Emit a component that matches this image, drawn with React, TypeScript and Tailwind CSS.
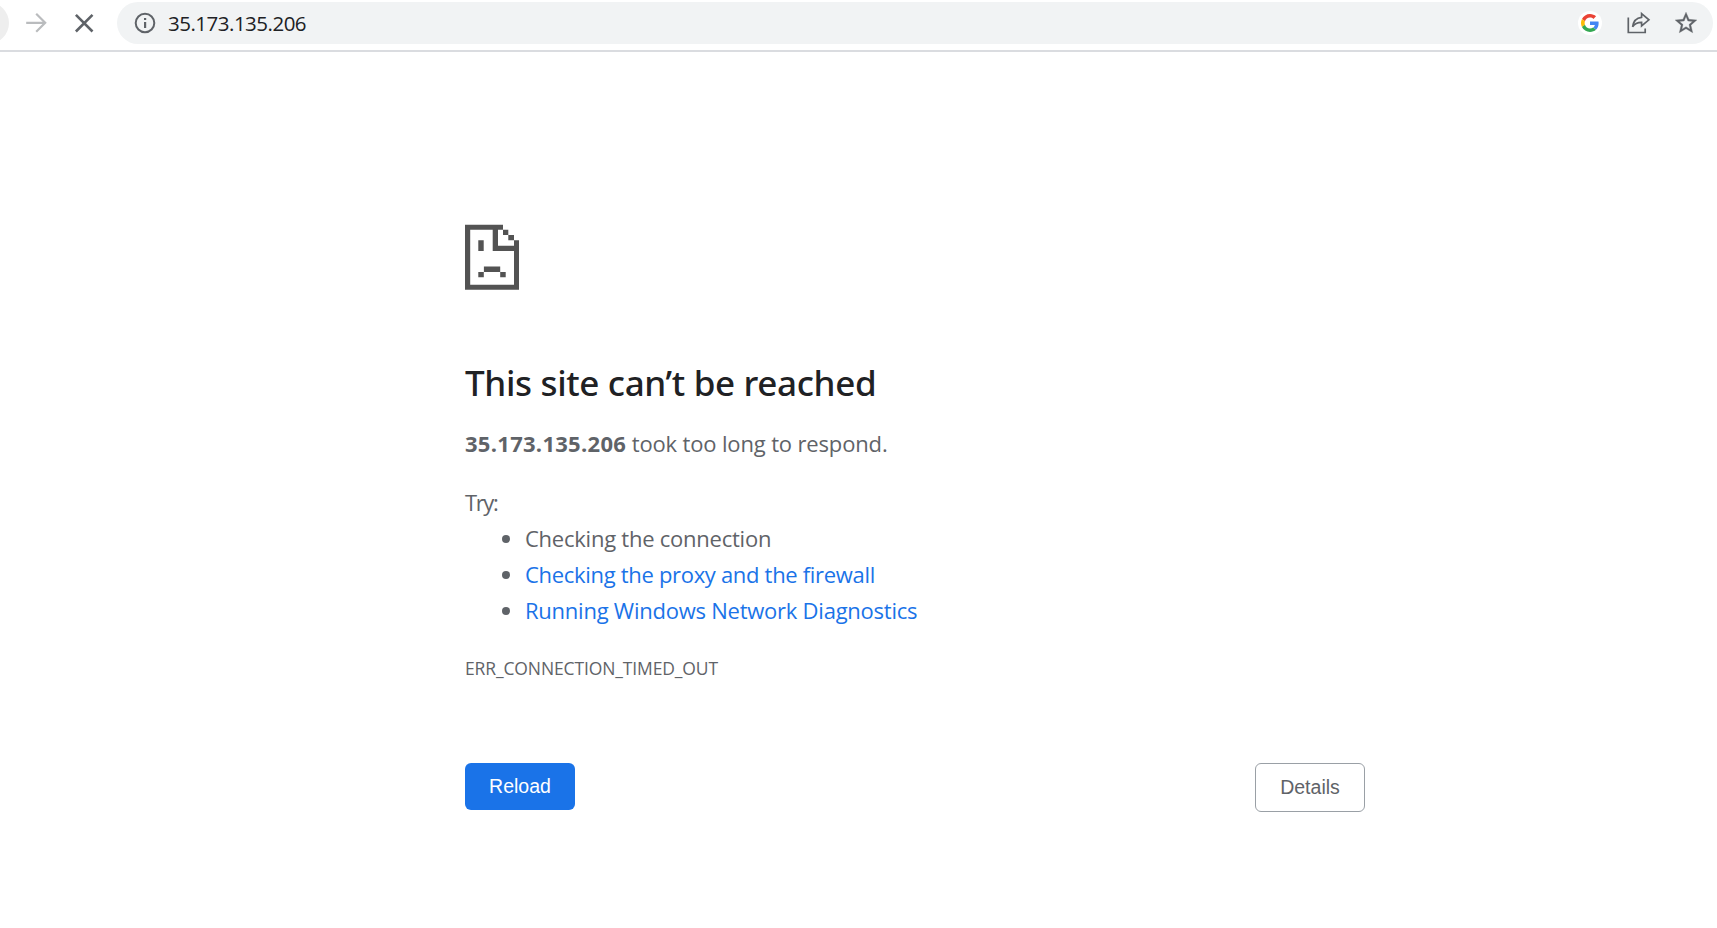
function ForwardIcon() {
  return (
    <svg width="24" height="24" viewBox="0 0 24 24" fill="none" stroke="#babcbe" strokeWidth="2.2">
      <path d="M2.2 11.8H21M12.2 2.8l9 9-9 9" />
    </svg>
  );
}

function StopIcon() {
  return (
    <svg width="24" height="24" viewBox="0 0 24 24" fill="none" stroke="#5f6368" strokeWidth="2.6">
      <path d="M3.9 3.9l16.6 16.6M20.5 3.9L3.9 20.5" />
    </svg>
  );
}

function InfoIcon() {
  return (
    <svg width="22" height="22" viewBox="0 0 22 22" fill="none">
      <circle cx="11" cy="11" r="9.3" stroke="#5f6368" strokeWidth="2" />
      <path d="M10 6h2.2v2.1H10zM10 10h2.2v6H10z" fill="#5f6368" />
    </svg>
  );
}

function GoogleIcon() {
  return (
    <svg width="18" height="18" viewBox="0 0 48 48">
      <path fill="#EA4335" d="M24 9.5c3.54 0 6.71 1.22 9.21 3.6l6.85-6.85C35.9 2.38 30.47 0 24 0 14.62 0 6.51 5.38 2.56 13.22l7.98 6.19C12.43 13.72 17.74 9.5 24 9.5z" />
      <path fill="#4285F4" d="M46.98 24.55c0-1.57-.15-3.09-.38-4.55H24v9.02h12.94c-.58 2.96-2.26 5.48-4.78 7.18l7.73 6c4.51-4.18 7.09-10.36 7.09-17.65z" />
      <path fill="#FBBC05" d="M10.53 28.59c-.48-1.45-.76-2.99-.76-4.59s.27-3.14.76-4.59l-7.98-6.19C.92 16.46 0 20.12 0 24c0 3.88.92 7.54 2.56 10.78l7.97-6.19z" />
      <path fill="#34A853" d="M24 48c6.48 0 11.93-2.13 15.89-5.81l-7.73-6c-2.15 1.45-4.92 2.3-8.16 2.3-6.26 0-11.57-4.22-13.47-9.91l-7.98 6.19C6.51 42.62 14.62 48 24 48z" />
    </svg>
  );
}

function ShareIcon() {
  return (
    <svg width="24" height="24" viewBox="0 0 24 24" fill="none" stroke="#5f6368" strokeWidth="1.7">
      <path d="M1.3 6.5V21.5H18.2V17.4" />
      <path d="M14.6 2.6L21.9 8.8L14.6 15V11.4C10.6 11.4 7.7 12.5 5.6 15.8C6.3 10.6 9.1 6.9 14.6 6.3Z" />
    </svg>
  );
}

function StarIcon() {
  return (
    <svg width="26" height="26" viewBox="0 0 24 24" fill="#5f6368" stroke="#5f6368" strokeWidth="0.3">
      <path d="M22 9.24l-7.19-.62L12 2 9.19 8.63 2 9.24l5.46 4.73L5.82 21 12 17.27 18.18 21l-1.63-7.03L22 9.24zM12 15.4l-3.76 2.27 1-4.28-3.32-2.88 4.38-.38L12 6.1l1.71 4.04 4.38.38-3.32 2.88 1 4.28L12 15.4z" />
    </svg>
  );
}

function SadPageIcon() {
  return (
    <svg width="54" height="66" viewBox="0 0 54 66" fill="#535353">
      <path d="M0 .7H38V5.7H33V21.7H49V16.3H54V65.7H0ZM5.2 5.7V60.7H49V27H27.7V5.7Z" fillRule="evenodd" />
      <path d="M38 5.7h5.3V11H38zM43.3 11H49v5.3h-5.7z" />
      <path d="M13.3 16.3h5.4V27h-5.4zM18.9 42.6h16.3v5.4H18.9zM13.3 48h5.5v5.3h-5.5zM35.2 48h5.5v5.3h-5.5z" />
    </svg>
  );
}

function Toolbar() {
  return (
    <header className="flex h-[52px] items-start overflow-hidden border-b-2 border-[#dadce0] bg-white">
      <div className="mt-0.5 -ml-[33px] size-[42px] shrink-0 rounded-full bg-[#eeeeee]" />
      <div className="mt-[11px] ml-[15px] shrink-0"><ForwardIcon /></div>
      <div className="mt-[11px] ml-6 shrink-0"><StopIcon /></div>
      <div className="mt-0.5 mr-1 ml-[21px] flex h-[42px] flex-1 items-center rounded-full bg-[#f1f3f4] pr-[14px] pl-[16.5px]">
        <InfoIcon />
        <span className="ml-[12.5px] flex-1 text-[20.5px] leading-[42px] tracking-[-0.5px] text-[#202124]">
          35.173.135.206
        </span>
        <span className="flex size-[24px] items-center justify-center rounded-full bg-white"><GoogleIcon /></span>
        <span className="ml-[25px]"><ShareIcon /></span>
        <span className="ml-[22px]"><StarIcon /></span>
      </div>
    </header>
  );
}

export default function App() {
  return (
    <div className="min-h-[928px] bg-white font-['Open_Sans',sans-serif] text-[22px] leading-9 tracking-[-0.24px] text-[#5f6368]">
      <Toolbar />
      <main className="ml-[465px] w-[900px] pt-[172px]">
        <SadPageIcon />
        <h1 className="mt-[71px] font-['Noto_Sans',sans-serif] text-[35px] leading-[43px] font-medium tracking-[-0.34px] text-[#202124]">
          This site can’t be reached
        </h1>
        <p className="mt-[21px] tracking-[-0.15px]">
          <strong className="font-bold tracking-[0.28px]">35.173.135.206</strong> took too long to respond.
        </p>
        <p className="mt-[23px] tracking-[-1.4px]">Try:</p>
        <ul className="list-disc pl-[60px]">
          <li>Checking the connection</li>
          <li><a className="tracking-[-0.31px] text-[#1a73e8]">Checking the proxy and the firewall</a></li>
          <li><a className="text-[#1a73e8]">Running Windows Network Diagnostics</a></li>
        </ul>
        <p className="mt-[27px] text-[17.5px] leading-[27px] tracking-[-0.13px]">ERR_CONNECTION_TIMED_OUT</p>
        <div className="mt-[81px] flex items-start justify-between font-['Liberation_Sans',sans-serif] text-[19.5px] tracking-normal">
          <button className="h-[47px] w-[110px] rounded-md bg-[#1a73e8] pb-0.5 text-white">Reload</button>
          <button className="h-[49px] w-[110px] rounded-md border border-[#9aa0a6] bg-white pb-0.5">Details</button>
        </div>
      </main>
    </div>
  );
}
